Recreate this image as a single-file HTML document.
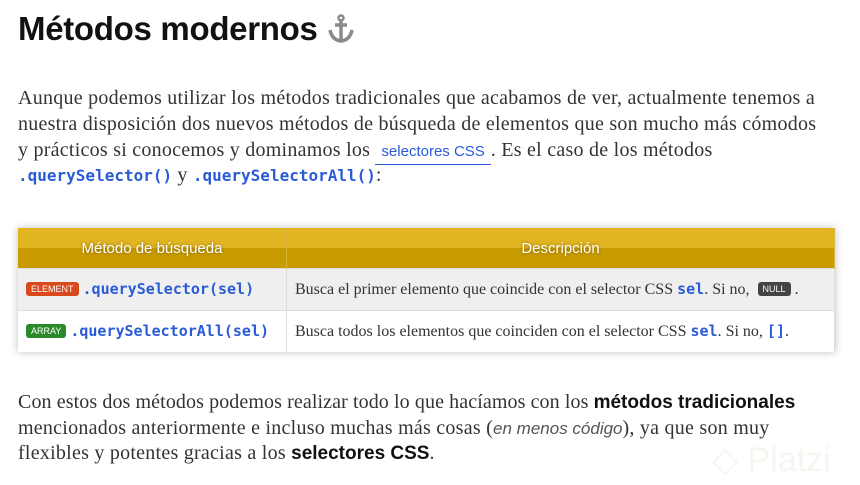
<!DOCTYPE html>
<html><head><meta charset="utf-8"><style>
body{margin:0;width:860px;height:485px;background:#fff;overflow:hidden;position:relative;font-family:"Liberation Serif",serif;color:#333}
.l{position:absolute;left:18px;white-space:nowrap;font-size:20px;line-height:26px;letter-spacing:0.25px}
h1{position:absolute;left:18px;top:10px;margin:0;font:bold 33px "Liberation Sans",sans-serif;color:#111;letter-spacing:-0.3px}
code{font-family:"DejaVu Sans Mono",monospace;color:#2a5bd7;font-size:16px;font-weight:bold;letter-spacing:0}
.link{color:#2a5bd7;font-family:"Liberation Sans",sans-serif;font-size:15px;border-bottom:1px solid #2a5bd7;padding:0 6px 4px;letter-spacing:0}
table{position:absolute;left:18px;top:228px;width:817px;border-collapse:collapse;box-shadow:0 0 8px rgba(0,0,0,.25)}
th{height:40px;padding:0;background:linear-gradient(#e1b421 0,#e1b421 50%,#c89b00 50%);color:#fff;font:15px "Liberation Sans",sans-serif;font-weight:normal;text-shadow:0 0 3px rgba(0,0,0,.4);border-right:1px solid #d9b540}
td{height:41px;padding:0 0 0 8px;border-right:1px solid #ddd;border-top:1px solid #ddd;font-size:16px;white-space:nowrap}
tr.a td{background:#efefef}
.b{font:9px "Liberation Sans",sans-serif;color:#fff;padding:2px 5px;border-radius:3px;vertical-align:2px}
td code{font-size:15px}
b{font-family:'Liberation Sans',sans-serif;color:#111;letter-spacing:0;font-size:19px}
</style></head><body>
<h1>Métodos modernos <svg width="30" height="32" viewBox="0 0 30 32" style="vertical-align:-5px"><g fill="none" stroke="#8a8a8a" stroke-width="3.5"><circle cx="15" cy="5" r="2.5" stroke-width="2.5"/><path d="M15 8v20M9 12h12M4 17q2 10 11 11q9-1 11-11"/></g></svg></h1>
<div class="l" style="top:85px">Aunque podemos utilizar los métodos tradicionales que acabamos de ver, actualmente tenemos a</div>
<div class="l" style="top:111px">nuestra disposición dos nuevos métodos de búsqueda de elementos que son mucho más cómodos</div>
<div class="l" style="top:137px">y prácticos si conocemos y dominamos los <span class="link">selectores CSS</span>. Es el caso de los métodos</div>
<div class="l" style="top:162px"><code>.querySelector()</code> y <code>.querySelectorAll()</code>:</div>
<table>
<tr><th style="width:268px">Método de búsqueda</th><th>Descripción</th></tr>
<tr class="a"><td><span class="b" style="background:#d8491c">ELEMENT</span> <code>.querySelector(sel)</code></td><td>Busca el primer elemento que coincide con el selector CSS <code>sel</code>. Si no, &nbsp;<span class="b" style="background:#444">NULL</span> .</td></tr>
<tr><td><span class="b" style="background:#2a8a2a">ARRAY</span> <code>.querySelectorAll(sel)</code></td><td>Busca todos los elementos que coinciden con el selector CSS <code>sel</code>. Si no, <code>[]</code>.</td></tr>
</table>
<div class="l" style="top:389px;letter-spacing:0.1px">Con estos dos métodos podemos realizar todo lo que hacíamos con los <b>métodos tradicionales</b></div>
<div class="l" style="top:415px">mencionados anteriormente e incluso muchas más cosas (<i style="font-family:'Liberation Sans',sans-serif;font-size:17px;color:#555;letter-spacing:0">en menos código</i>), ya que son muy</div>
<div class="l" style="top:440px">flexibles y potentes gracias a los <b>selectores CSS</b>.</div>
<div style="position:absolute;left:712px;top:440px;font:34px 'Liberation Sans',sans-serif;color:#f4f7ef">◇ Platzi</div>
</body></html>
